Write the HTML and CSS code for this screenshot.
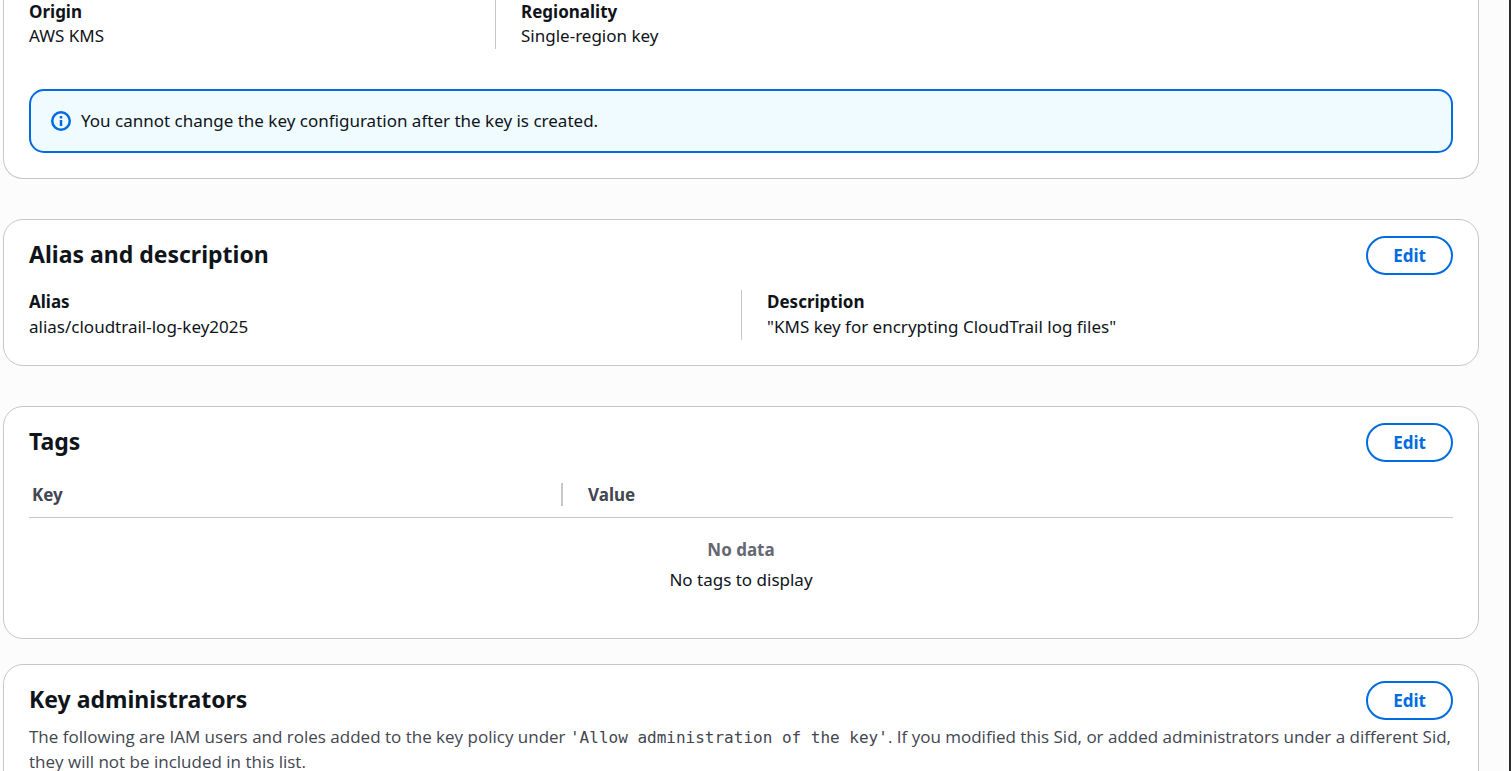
FILE: index.html
```html
<!DOCTYPE html>
<html lang="en">
<head>
<meta charset="utf-8">
<title>Customer managed key</title>
<link rel="stylesheet" href="styles.css">
</head>
<body>
<main class="page">
  <section class="card card-config">
    <dl class="columns thirds">
      <div class="column"><dt>Origin</dt><dd>AWS KMS</dd></div>
      <div class="column"><dt>Regionality</dt><dd>Single-region key</dd></div>
    </dl>
    <div class="alert" role="status">
      <svg class="icon" viewBox="0 0 20 20" aria-hidden="true"><circle cx="10" cy="10" r="8.75"/><path d="M10 9v6M10 5v2.5"/></svg>
      <span>You cannot change the key configuration after the key is created.</span>
    </div>
  </section>

  <section class="card">
    <header class="card-header"><h2>Alias and description</h2><button class="button" type="button">Edit</button></header>
    <dl class="columns halves">
      <div class="column"><dt>Alias</dt><dd>alias/cloudtrail-log-key2025</dd></div>
      <div class="column"><dt>Description</dt><dd>"KMS key for encrypting CloudTrail log files"</dd></div>
    </dl>
  </section>

  <section class="card card-tags">
    <header class="card-header"><h2>Tags</h2><button class="button" type="button">Edit</button></header>
    <table class="table">
      <thead><tr><th class="key" scope="col"><div>Key</div></th><th scope="col"><div>Value</div></th></tr></thead>
      <tbody><tr><td colspan="2"><strong>No data</strong><p>No tags to display</p></td></tr></tbody>
    </table>
  </section>

  <section class="card card-admins">
    <header class="card-header"><h2>Key administrators</h2><button class="button" type="button">Edit</button></header>
    <p class="note">The following are IAM users and roles added to the key policy under <code>'Allow administration of the key'</code>. If you modified this Sid, or added administrators under a different Sid, they will not be included in this list.</p>
  </section>
</main>
</body>
</html>
```
FILE: styles.css
```css
* { box-sizing: border-box; }
html { height: 100%; overflow: hidden; }
body {
  margin: 0;
  height: 100%;
  overflow: hidden;
  background: #fcfcfd;
  color: #0f141a;
  font: 17px/25px "Noto Sans", "Open Sans", sans-serif;
  border-right: 2px solid #2b2b2e;
}
h2, p, dl, dd { margin: 0; }
.page { padding: 0 30px 0 3px; }
.card {
  background: #fff;
  border: 1px solid #c6c6cd;
  border-radius: 20px;
  padding: 16px 25px 25px;
  margin-bottom: 40px;
}
.card-config { border-top: 0; border-radius: 0 0 20px 20px; padding-top: 0; }
.card-header { display: flex; align-items: flex-start; justify-content: space-between; margin-bottom: 15px; }
h2 { font-size: 23px; line-height: 36px; font-weight: 700; }
.button {
  height: 39px;
  padding: 0 25px;
  border: 2px solid #006ce0;
  border-radius: 20px;
  background: #fff;
  color: #006ce0;
  font: 700 17px/25px "Noto Sans", "Open Sans", sans-serif;
}
.columns { display: grid; }
.halves { grid-template-columns: 1fr 1fr; }
.thirds { grid-template-columns: 466px 1fr; }
.column { padding-bottom: 1px; }
.column + .column { border-left: 1px solid #c6c6cd; padding-left: 25px; }
dt { font-weight: 700; line-height: 24px; }
.card-config dt { line-height: 23px; }
.alert {
  display: flex;
  align-items: center;
  gap: 10px;
  margin-top: 40px;
  padding: 17px 20px 18px;
  border: 2px solid #006ce0;
  border-radius: 15px;
  background: #f0fbff;
}
.icon { width: 20px; height: 20px; fill: none; stroke: #006ce0; stroke-width: 2.5; }
.card-tags { margin-bottom: 25px; padding-bottom: 46px; }
.table { width: 100%; border-collapse: collapse; table-layout: fixed; }
th { padding: 6px 0 11px; color: #424650; text-align: left; border-bottom: 1px solid #c6c6cd; }
th div { padding-left: 25px; line-height: 23px; }
.key { width: 534px; }
.key div { padding-left: 3px; border-right: 2px solid #c6c6cd; }
td { padding: 19px 0 0; text-align: center; }
td strong { display: block; color: #656871; }
td p { margin-top: 5px; }
.card-admins .card-header { margin-bottom: 4px; }
.note { color: #424650; font-family: "Open Sans", "Noto Sans", sans-serif; }
code { font: 16px/20px "DejaVu Sans Mono", monospace; }
```
